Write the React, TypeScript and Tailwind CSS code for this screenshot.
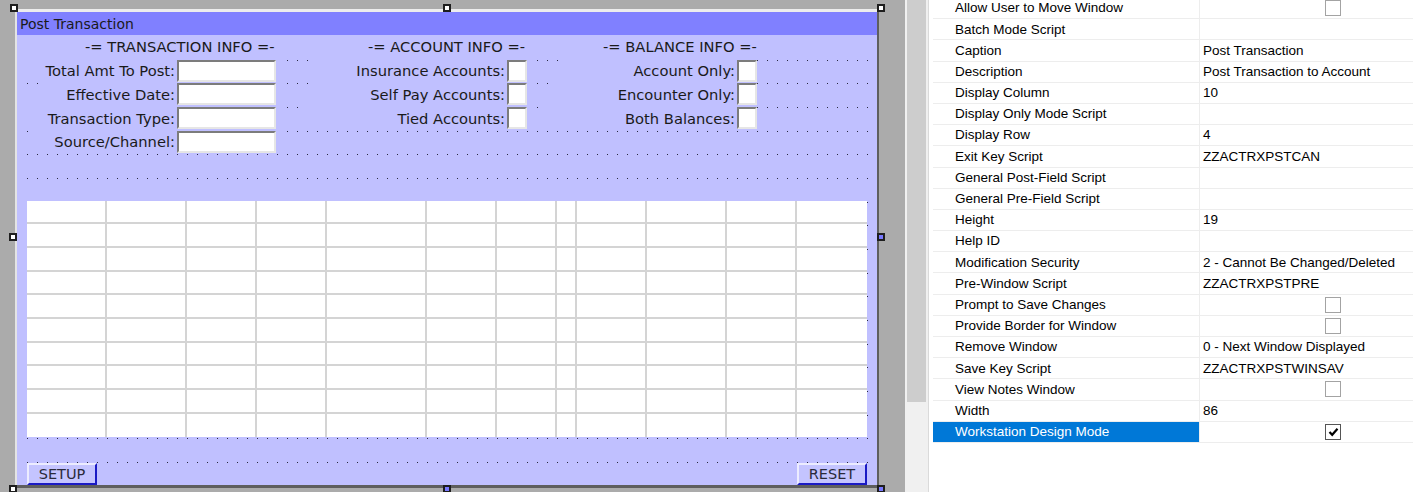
import React from "react";

type Prop = { label: string; value?: string; cb?: "off" | "on"; sel?: boolean };

const PROPS: Prop[] = [
  { label: "Allow User to Move Window", cb: "off" },
  { label: "Batch Mode Script" },
  { label: "Caption", value: "Post Transaction" },
  { label: "Description", value: "Post Transaction to Account" },
  { label: "Display Column", value: "10" },
  { label: "Display Only Mode Script" },
  { label: "Display Row", value: "4" },
  { label: "Exit Key Script", value: "ZZACTRXPSTCAN" },
  { label: "General Post-Field Script" },
  { label: "General Pre-Field Script" },
  { label: "Height", value: "19" },
  { label: "Help ID" },
  { label: "Modification Security", value: "2 - Cannot Be Changed/Deleted" },
  { label: "Pre-Window Script", value: "ZZACTRXPSTPRE" },
  { label: "Prompt to Save Changes", cb: "off" },
  { label: "Provide Border for Window", cb: "off" },
  { label: "Remove Window", value: "0 - Next Window Displayed" },
  { label: "Save Key Script", value: "ZZACTRXPSTWINSAV" },
  { label: "View Notes Window", cb: "off" },
  { label: "Width", value: "86" },
  { label: "Workstation Design Mode", cb: "on", sel: true },
];

const TABLE_COLS = [
  "w-[80px]",
  "w-[80px]",
  "w-[70px]",
  "w-[70px]",
  "w-[100px]",
  "w-[70px]",
  "w-[60px]",
  "w-[20px]",
  "w-[70px]",
  "w-[80px]",
  "w-[70px]",
  "w-[70px]",
];

function Label({ cls, children }: { cls: string; children: React.ReactNode }) {
  return (
    <div className={cls + " flex items-center justify-end pr-[2px] pt-[2px] bg-[#c0c0ff] whitespace-nowrap"}>
      {children}
    </div>
  );
}

function InputBox({ cls }: { cls: string }) {
  return (
    <div className={cls + " flex items-center bg-[#c0c0ff]"}>
      <div className="w-[99px] h-[22px] bg-white border-2 border-t-[#7c7c7c] border-l-[#7c7c7c] border-r-[#e6e6e6] border-b-[#e6e6e6]" />
    </div>
  );
}

function CheckBox({ cls }: { cls: string }) {
  return (
    <div className={cls + " flex items-center bg-[#c0c0ff]"}>
      <div className="w-[20px] h-[22px] bg-white border-2 border-t-[#7c7c7c] border-l-[#7c7c7c] border-r-[#e6e6e6] border-b-[#e6e6e6]" />
    </div>
  );
}

function Handle({ cls }: { cls: string }) {
  return <div className={"absolute w-[8px] h-[8px] border-2 border-[#1e1e1e] " + cls} />;
}

function PGCheck({ on }: { on: boolean }) {
  return (
    <div
      className={
        "ml-[122px] w-[16px] h-[16px] bg-white flex items-center justify-center border " +
        (on ? "border-[#555555]" : "border-[#a3a3a3]")
      }
    >
      {on && (
        <svg width="11" height="10" viewBox="0 0 11 10">
          <path d="M1.5 5 L4.2 7.8 L9.5 1.8" fill="none" stroke="#000" strokeWidth="2.2" />
        </svg>
      )}
    </div>
  );
}

export default function App() {
  const rows = Array.from({ length: 19 });
  const trows = Array.from({ length: 10 });
  return (
    <div className="flex w-[1413px] h-[492px] overflow-hidden bg-white">
      {/* design canvas */}
      <div className="relative w-[905px] h-[492px] shrink-0 bg-[#ababab] pl-[15px] pt-[9px]">
        <div className="w-[864px] h-[479px] flex flex-col border-t-[3px] border-l-2 border-r-2 border-b-[3px] border-t-[#ededed] border-l-[#e4e4e4] border-r-[#5e5e5e] border-b-[#5e5e5e] font-['DejaVu_Sans',sans-serif] text-[#1a1a1a]">
          <div className="h-[23px] shrink-0 bg-[#8080ff] flex items-center pl-[3px] pt-[1px] text-[14px] leading-none">
            Post Transaction
          </div>
          <div className="grid grid-cols-[repeat(86,10px)] grid-rows-[repeat(19,23.68px)] bg-[#c0c0ff] text-[14.7px] leading-none">
            {/* dot grid */}
            <div className="col-start-2 col-span-85 row-start-1 row-span-19 flex flex-col">
              {rows.map((_, i) => (
                <div key={i} className="h-[23.68px] shrink-0 pt-[1px]">
                  <div className="h-[1px] bg-[linear-gradient(90deg,#2a2a40_1px,transparent_1px)] bg-[length:10px_1px] bg-repeat-x" />
                </div>
              ))}
            </div>

            {/* row 0 : section headers */}
            <div className="col-start-1 col-span-86 row-start-1 bg-[#c0c0ff]" />
            <div className="col-start-7 col-span-28 row-start-1 flex items-center pl-[8px] pt-[2px] whitespace-nowrap">
              -= TRANSACTION INFO =-
            </div>
            <div className="col-start-35 col-span-24 row-start-1 flex items-center pl-[11px] pt-[2px] whitespace-nowrap">
              -= ACCOUNT INFO =-
            </div>
            <div className="col-start-59 col-span-28 row-start-1 flex items-center pl-[6px] pt-[2px] whitespace-nowrap">
              -= BALANCE INFO =-
            </div>

            {/* row 1 */}
            <Label cls="col-start-2 col-span-15 row-start-2">Total Amt To Post:</Label>
            <InputBox cls="col-start-17 col-span-11 row-start-2" />
            <Label cls="col-start-31 col-span-19 row-start-2">Insurance Accounts:</Label>
            <CheckBox cls="col-start-50 col-span-3 row-start-2" />
            <Label cls="col-start-56 col-span-17 row-start-2">Account Only:</Label>
            <CheckBox cls="col-start-73 col-span-2 row-start-2" />

            {/* row 2 */}
            <Label cls="col-start-4 col-span-13 row-start-3">Effective Date:</Label>
            <InputBox cls="col-start-17 col-span-11 row-start-3" />
            <Label cls="col-start-31 col-span-19 row-start-3">Self Pay Accounts:</Label>
            <CheckBox cls="col-start-50 col-span-3 row-start-3" />
            <Label cls="col-start-55 col-span-18 row-start-3">Encounter Only:</Label>
            <CheckBox cls="col-start-73 col-span-2 row-start-3" />

            {/* row 3 */}
            <Label cls="col-start-2 col-span-15 row-start-4">Transaction Type:</Label>
            <InputBox cls="col-start-17 col-span-11 row-start-4" />
            <Label cls="col-start-30 col-span-20 row-start-4">Tied Accounts:</Label>
            <CheckBox cls="col-start-50 col-span-3 row-start-4" />
            <Label cls="col-start-54 col-span-19 row-start-4">Both Balances:</Label>
            <CheckBox cls="col-start-73 col-span-2 row-start-4" />

            {/* row 4 */}
            <Label cls="col-start-3 col-span-14 row-start-5">Source/Channel:</Label>
            <InputBox cls="col-start-17 col-span-11 row-start-5" />

            {/* table */}
            <div className="col-start-2 col-span-84 row-start-8 row-span-10 bg-white flex flex-col">
              {trows.map((_, r) => (
                <div
                  key={r}
                  className={
                    "flex h-[23.68px] shrink-0 " + (r < 9 ? "border-b-2 border-[#d4d4d4]" : "")
                  }
                >
                  {TABLE_COLS.map((w, c) => (
                    <div
                      key={c}
                      className={w + " h-full shrink-0 " + (c < 11 ? "border-r-2 border-[#d4d4d4]" : "")}
                    />
                  ))}
                </div>
              ))}
            </div>

            {/* buttons */}
            <div className="col-start-2 col-span-7 row-start-19 self-end h-[22px] flex items-center justify-center pt-[1px] bg-[#c4c4ff] border-2 border-t-[#ececff] border-l-[#ececff] border-r-[#1a1ac4] border-b-[#1a1ac4] text-[14.5px] text-[#2a2a3a]">
              SETUP
            </div>
            <div className="col-start-79 col-span-7 row-start-19 self-end h-[22px] flex items-center justify-center pt-[1px] bg-[#c4c4ff] border-2 border-t-[#ececff] border-l-[#ececff] border-r-[#1a1ac4] border-b-[#1a1ac4] text-[14.5px] text-[#2a2a3a]">
              RESET
            </div>
          </div>
        </div>

        {/* selection handles */}
        <Handle cls="left-[10px] top-[4px] bg-white" />
        <Handle cls="left-[443px] top-[4px] bg-white" />
        <Handle cls="left-[877px] top-[4px] bg-white" />
        <Handle cls="left-[9px] top-[233px] bg-white" />
        <Handle cls="left-[877px] top-[233px] bg-[#7878ff]" />
        <Handle cls="left-[9px] top-[485px] bg-white" />
        <Handle cls="left-[443px] top-[485px] bg-[#7878ff]" />
        <Handle cls="left-[877px] top-[485px] bg-[#7878ff]" />
      </div>

      {/* scrollbar */}
      <div className="w-[23px] h-[492px] shrink-0 bg-[#f0f0f0] pl-[2px]">
        <div className="w-[19px] h-[402px] bg-[#cdcdcd]" />
      </div>

      {/* splitter */}
      <div className="w-[5px] h-[492px] shrink-0 bg-white border-l border-[#dadada]" />

      {/* property grid */}
      <div className="flex-1 h-[492px] bg-white font-['Liberation_Sans',Arial,sans-serif] text-[13.5px] leading-none text-black">
        <div className="-mt-[2px] flex flex-col">
          {PROPS.map((p, i) => (
            <div key={i} className="flex h-[21.2px] shrink-0 border-b border-[#ededed]">
              <div
                className={
                  "w-[267px] shrink-0 flex items-center pl-[22px] border-r border-[#ededed] whitespace-nowrap " +
                  (p.sel ? "bg-[#0078d7] text-white" : "")
                }
              >
                {p.label}
              </div>
              <div className="flex-1 flex items-center pl-[3px] whitespace-nowrap">
                {p.cb ? <PGCheck on={p.cb === "on"} /> : p.value}
              </div>
            </div>
          ))}
        </div>
      </div>
    </div>
  );
}
